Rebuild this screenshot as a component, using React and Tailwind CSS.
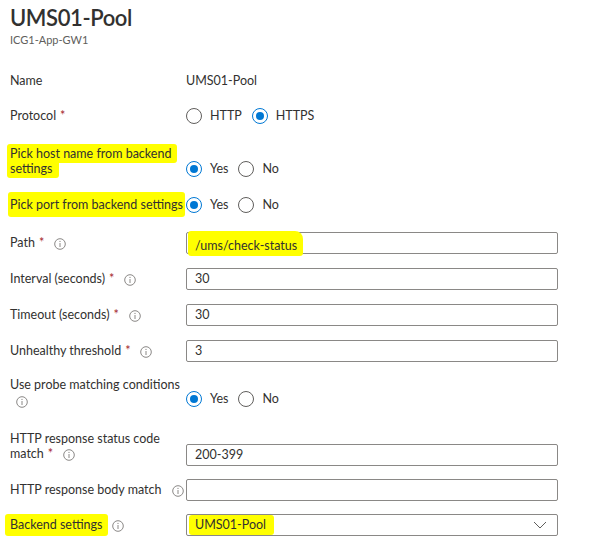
import React from 'react';

const font = { fontFamily: 'Lato, "Noto Sans", sans-serif' };

function Info() {
  return (
    <svg width="12" height="12" viewBox="0 0 12 12" className="inline-block shrink-0">
      <circle cx="6" cy="6" r="5.3" fill="none" stroke="#8a8886" strokeWidth="1" />
      <line x1="6" y1="5" x2="6" y2="9" stroke="#8a8886" strokeWidth="1" />
      <circle cx="6" cy="3.4" r="0.6" fill="#8a8886" />
    </svg>
  );
}

function Req() {
  return <span className="text-[#a4262c] ml-1">*</span>;
}

function Radio({ checked, label }) {
  return (
    <span className="flex items-center">
      <span
        className={`w-4 h-4 rounded-full border flex items-center justify-center ${
          checked ? 'border-[#0078d4]' : 'border-[#605e5c]'
        }`}
      >
        {checked && <span className="w-2 h-2 rounded-full bg-[#0078d4]" />}
      </span>
      <span className="ml-2">{label}</span>
    </span>
  );
}

function Radios({ options, value }) {
  return (
    <div className="flex items-center gap-[10px]">
      {options.map((o) => (
        <Radio key={o} label={o} checked={o === value} />
      ))}
    </div>
  );
}

function Input({ children }) {
  return (
    <div className="w-[372px] h-[22px] border border-[#8a8886] rounded-[2px] flex items-center px-2 bg-white">
      {children}
    </div>
  );
}

// label column + control column, fixed height so rows stay on their grid
function Row({ label, children, h, top, align = 'items-center' }) {
  return (
    <div className={`flex ${align} ${h} ${top}`}>
      <div className="w-[176px] shrink-0">{label}</div>
      <div className="flex-1">{children}</div>
    </div>
  );
}

function Labeled({ text, req, gap = 'ml-[10px]' }) {
  return (
    <span className="flex items-center whitespace-nowrap">
      {text}
      {req && <Req />}
      <span className={gap}>
        <Info />
      </span>
    </span>
  );
}

const Hl = ({ children, className = '' }) => (
  <span className={`bg-[#ffff00] rounded-[3px] [box-decoration-break:clone] ${className}`}>{children}</span>
);

export default function App() {
  return (
    <div className="w-[599px] h-[558px] bg-white text-[#323130] text-[12.5px] leading-[16px] pl-[10px] overflow-hidden" style={font}>
      <h1 className="text-[22px] leading-[30px] font-semibold tracking-[-0.4px] text-[#323130] pt-[3px]">UMS01-Pool</h1>
      <div className="text-[11px] leading-[14px] text-[#605e5c]">ICG1-App-GW1</div>

      <Row label="Name" h="h-[16px]" top="mt-[26px]">
        UMS01-Pool
      </Row>

      <Row
        h="h-[16px]"
        top="mt-[19px]"
        label={
          <span>
            Protocol
            <Req />
          </span>
        }
      >
        <Radios options={['HTTP', 'HTTPS']} value="HTTPS" />
      </Row>

      <Row
        h="h-[32px]"
        top="mt-[21px]"
        align="items-end"
        label={
          <div className="w-[168px] leading-[15px] pb-[1px]">
            <Hl className="pl-[3px] pr-[6px] py-[2px] -ml-[3px]">Pick host name from backend settings</Hl>
          </div>
        }
      >
        <Radios options={['Yes', 'No']} value="Yes" />
      </Row>

      <Row
        h="h-[16px]"
        top="mt-[20px]"
        label={<Hl className="px-[2px] py-[5px] -ml-[2px] whitespace-nowrap">Pick port from backend settings</Hl>}
      >
        <Radios options={['Yes', 'No']} value="Yes" />
      </Row>

      <Row h="h-[22px]" top="mt-[19px]" label={<Labeled text="Path" req />}>
        <Input>
          <Hl className="-ml-[7px] pl-[7px] pr-[6px] pt-[7px] pb-[2px] rounded-tr-[8px]">/ums/check-status</Hl>
        </Input>
      </Row>

      <Row h="h-[22px]" top="mt-[14px]" label={<Labeled text="Interval (seconds)" req />}>
        <Input>30</Input>
      </Row>

      <Row h="h-[22px]" top="mt-[14px]" label={<Labeled text="Timeout (seconds)" req />}>
        <Input>30</Input>
      </Row>

      <Row h="h-[22px]" top="mt-[14px]" label={<Labeled text="Unhealthy threshold" req />}>
        <Input>3</Input>
      </Row>

      <Row
        h="h-[32px]"
        top="mt-[15px]"
        align="items-end"
        label={
          <div className="leading-[15px]">
            <div className="whitespace-nowrap">Use probe matching conditions</div>
            <div className="pl-[6px] pt-[2px] h-[17px] flex items-center">
              <Info />
            </div>
          </div>
        }
      >
        <div className="pb-[2px]">
          <Radios options={['Yes', 'No']} value="Yes" />
        </div>
      </Row>

      <Row
        h="h-[36px]"
        top="mt-[21px]"
        align="items-end"
        label={
          <div className="leading-[15px] pb-[5px]">
            <div className="whitespace-nowrap">HTTP response status code</div>
            <Labeled text="match" req />
          </div>
        }
      >
        <Input>200-399</Input>
      </Row>

      <Row h="h-[22px]" top="mt-[13px]" label={<Labeled text="HTTP response body match" />}>
        <Input />
      </Row>

      <Row
        h="h-[22px]"
        top="mt-[13px]"
        label={
          <span className="flex items-center whitespace-nowrap">
            <Hl className="-ml-[5px] pl-[5px] pr-[6px] py-[3px]">Backend settings</Hl>
            <span className="ml-[4px]">
              <Info />
            </span>
          </span>
        }
      >
        <div className="w-[372px] h-[22px] border border-[#8a8886] rounded-[2px] flex items-center justify-between px-2">
          <Hl className="-ml-[6px] pl-[6px] pr-[8px] py-[2px]">UMS01-Pool</Hl>
          <svg width="14" height="8" viewBox="0 0 14 8" className="mr-[2px]">
            <path d="M1 1 L7 7 L13 1" fill="none" stroke="#605e5c" strokeWidth="1" />
          </svg>
        </div>
      </Row>
    </div>
  );
}
